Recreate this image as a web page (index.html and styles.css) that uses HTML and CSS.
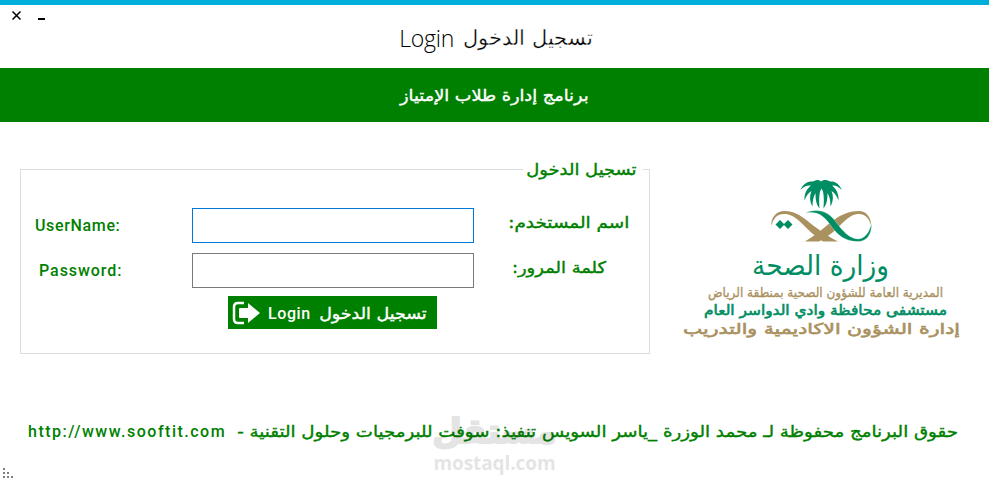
FILE: index.html
```
<!DOCTYPE html>
<html lang="ar">
<head>
<meta charset="utf-8">
<title>تسجيل الدخول Login</title>
<link rel="stylesheet" href="styles.css">
</head>
<body>
<div class="window">
  <header class="titlebar">
    <div class="controls">
      <button class="control" aria-label="Close"><svg width="9" height="9" viewBox="0 0 9 9"><path d="M.5.5l8 8M8.500.5l-8 8"/></svg></button>
      <button class="control control--min" aria-label="Minimize"><svg width="7" height="2" viewBox="0 0 7 2"><path d="M0 1h7"/></svg></button>
    </div>
    <h1 class="title"><span class="title-ar">تسجيل الدخول</span><span class="title-en">Login</span></h1>
  </header>
  <div class="banner"><span class="ar">برنامج إدارة طلاب الإمتياز</span></div>
  <main class="content">
    <fieldset class="panel">
      <legend class="legend"><span class="ar">تسجيل الدخول</span></legend>
      <div class="row">
        <label class="label-ar" for="user"><span class="ar ar--wide">اسم المستخدم:</span></label>
        <input class="field field--active" id="user" type="text">
        <label class="label-en" for="user">UserName:</label>
      </div>
      <div class="row row--password">
        <label class="label-ar" for="pass"><span class="ar">كلمة المرور:</span></label>
        <input class="field" id="pass" type="password">
        <label class="label-en" for="pass">Password:</label>
      </div>
      <button class="login">
        <span class="login-ar"><span class="ar">تسجيل الدخول</span></span>
        <span class="login-en">Login</span>
        <svg class="login-icon" width="29" height="24" viewBox="0 0 29 24"><path class="frame" d="M12 2H6Q2 2 2 6v12q0 4 4 4h6"/><path class="arrow" d="M8 7h8V2l12 10-12 10v-5H8q-1 0-1-1V8q0-1 1-1z"/></svg>
      </button>
    </fieldset>
    <svg class="logo" width="280" height="166" viewBox="683 176 280 166">
      <path class="green" d="M800 190c4-7 8-9 13-8.500 3-2 6-2 8 0 2-2 6-2 9 0 5-.5 9 2 12 8.500-4-4-7-5-10-4.500 4 3 7 8 6.500 15-2-5-4-8-7-9.500 2 5 2 10-1 15.500 0-6-1-10-3-13.500 0 6-.5 11-4 15.500.5-7 .5-12-.5-17l-1.500-3-1.500 3c-1 5-1 10-.5 17-3.500-4.500-4-9.500-4-15.500-2 3.500-3 7.500-3 13.500-3-5.500-3-10.500-1-15.500-3 1.500-5 4.500-7 9.500-.5-7 2.500-12 6.500-15-3-.5-7 .5-11 4.500z"/>
      <path class="sand" d="M771.300 226c-.3-9 5-15 13.700-15 8 0 15 4 22 9.500 10 8 18 14 31 21h-15c-9-6-15-12-20-17-8-8-13-10.500-19-10.500-7 0-10.500 4-12.700 12z"/>
      <path class="sand" d="M871.300 226c-.3-9-5-15-12.700-15-9 0-16 3-24 8.500-10 7.500-18 15-29.600 22h14c10-5 18-13 24-19 6-6 11-8.500 16-8.500 6 0 10 4 12.300 12z"/>
      <path class="halo" d="M805.500 213c10-4.500 21-3 29 7 6 8 12 16 20 18.500 8 2 14-3 17-15 .5 11-5 18-13.500 18-10 0-17-4-22-9.500-5-5-8-12-14-16-5-3.500-10-4-16.500-3z"/>
      <path class="green" d="M775.500 224.500l4.500-4.500 4 4 4-4 4.500 4.500-4.500 4.500-4-4-4 4z"/>
      <g class="caption">
        <text class="green ministry" x="889" y="275" textLength="137" lengthAdjust="spacingAndGlyphs">وزارة الصحة</text>
        <text class="sand region" x="943" y="297" textLength="235" lengthAdjust="spacingAndGlyphs">المديرية العامة للشؤون الصحية بمنطقة الرياض</text>
        <text class="green hospital" x="947" y="315" textLength="243" lengthAdjust="spacingAndGlyphs">مستشفى محافظة وادي الدواسر العام</text>
        <text class="sand department" x="960" y="334" textLength="277" lengthAdjust="spacingAndGlyphs">إدارة الشؤون الاكاديمية والتدريب</text>
      </g>
    </svg>
  </main>
  <footer class="footer">
    <span class="ar ar--footer">حقوق البرنامج محفوظة لـ محمد الوزرة _ياسر السويس تنفيذ: سوفت للبرمجيات وحلول التقنية -</span>
    <span class="url" dir="ltr">http://www.sooftit.com</span>
  </footer>
  <div class="watermark"><span class="mark-ar">مستقل</span><span class="mark-en">mostaql.com</span></div>
  <svg class="grip" width="11" height="11" viewBox="0 0 11 11"><path d="M0 0h2v2H0zM0 4h2v2H0zM4 4h2v2H4zM0 8h2v2H0zM4 8h2v2H4zM8 8h2v2H8z"/></svg>
</div>
</body>
</html>
```
FILE: styles.css
```
* { box-sizing: border-box; }
body { margin: 0; background: #fff; font: 16px/20px "DejaVu Sans", sans-serif; color: green; overflow: hidden; }
button { font: inherit; border: 0; padding: 0; }
.window { position: relative; width: 989px; height: 482px; direction: rtl; border-top: 5px solid #00aedb; }

.titlebar { height: 63px; display: flex; justify-content: center; padding: 18px 0 0 3px; color: #000; }
.controls { position: absolute; left: 12px; top: 6px; display: flex; gap: 17px; direction: ltr; }
.control { display: flex; height: 9px; background: none; }
.control svg { display: block; fill: none; stroke: #000; stroke-width: 1.5; }
.control--min { align-items: flex-end; }
.control--min svg { stroke-width: 2; }
.title { margin: 0; display: flex; gap: 9px; font-weight: 300; line-height: 30px; }
.title-ar { font-size: 21px; -webkit-text-stroke: .35px #fff; }
.title-en { font-family: "Open Sans", sans-serif; font-size: 23px; font-weight: 300; letter-spacing: -.2px; }

.ar { display: inline-block; position: relative; top: 1px; white-space: nowrap; transform: scaleX(1.12); transform-origin: right; -webkit-text-stroke: .4px currentColor; }
.banner .ar { transform: scaleX(1.105); }
.ar--wide { transform: scaleX(1.15); }
.ar--footer { transform: scaleX(1.137); }

.banner { height: 54px; display: flex; align-items: center; padding-right: 400px; background: green; color: #fff; }

.content { display: flex; height: 242px; padding: 37px 26px 0 20px; justify-content: space-between; direction: ltr; }
.panel { width: 630px; height: 195px; margin: 0; padding: 29px 0 0; border: 1px solid #dcdcdc; direction: rtl; }
.legend { width: 120px; height: 20px; margin-right: 6px; padding: 0 6px 0 0; }
.row { display: flex; height: 35px; margin-bottom: 10px; }
.label-ar { width: 175px; padding: 4px 20px 0 0; }
.row--password .label-ar { padding-right: 43px; }
.field { width: 282px; height: 35px; border: 1px solid #7a7a7a; border-radius: 0; background: #fff; outline: 0; }
.field--active { border-color: #0078d7; }
.label-en { width: 171px; padding: 8px 0 0 14px; direction: ltr; font-family: Roboto, sans-serif; font-weight: 500; letter-spacing: .65px; }
.row--password .label-en { padding-left: 18px; letter-spacing: .95px; }
.login { display: flex; align-items: center; width: 209px; height: 33px; margin: -2px 212px 0 0; padding: 0 10px 0 4px; background: green; color: #fff; }
.login-ar { width: 110px; text-align: right; }
.login-ar .ar { transform: scaleX(1.09); }
.login-en { width: 49px; padding-top: 2px; direction: ltr; text-align: left; font-family: Roboto, sans-serif; font-weight: 500; letter-spacing: .6px; }
.login-icon { flex: none; margin-right: 7px; }
.frame { fill: none; stroke: #fff; stroke-width: 2.5; }
.arrow { fill: #fff; }

.logo { margin-top: 17px; }
.green { fill: #008d63; }
.sand { fill: #aa9160; }
.halo { fill: #008d63; stroke: #fff; stroke-width: .3; }
.caption text { direction: rtl; }
.ministry { font-size: 28px; }
.region { font-size: 13px; stroke: #aa9160; stroke-width: .3; }
.hospital { font-size: 14px; stroke: #008d63; stroke-width: .6; }
.department { font-size: 15px; stroke: #aa9160; stroke-width: .6; }

.footer { display: flex; justify-content: space-between; padding: 57px 31px 0 28px; }
.url { padding-top: 1px; font-family: Roboto, sans-serif; font-weight: 500; letter-spacing: 1.5px; }

.watermark { position: absolute; left: 434px; top: 404px; width: 121px; display: flex; flex-direction: column; align-items: center; color: #000; opacity: .1; font-weight: 700; white-space: nowrap; }
.mark-ar { font-size: 34px; line-height: 44px; -webkit-text-stroke: 2px #000; }
.mark-en { direction: ltr; font: 700 19px/20px "Open Sans", sans-serif; letter-spacing: -.1px; }
.grip { position: absolute; left: 3px; top: 463px; fill: #808080; }
```
